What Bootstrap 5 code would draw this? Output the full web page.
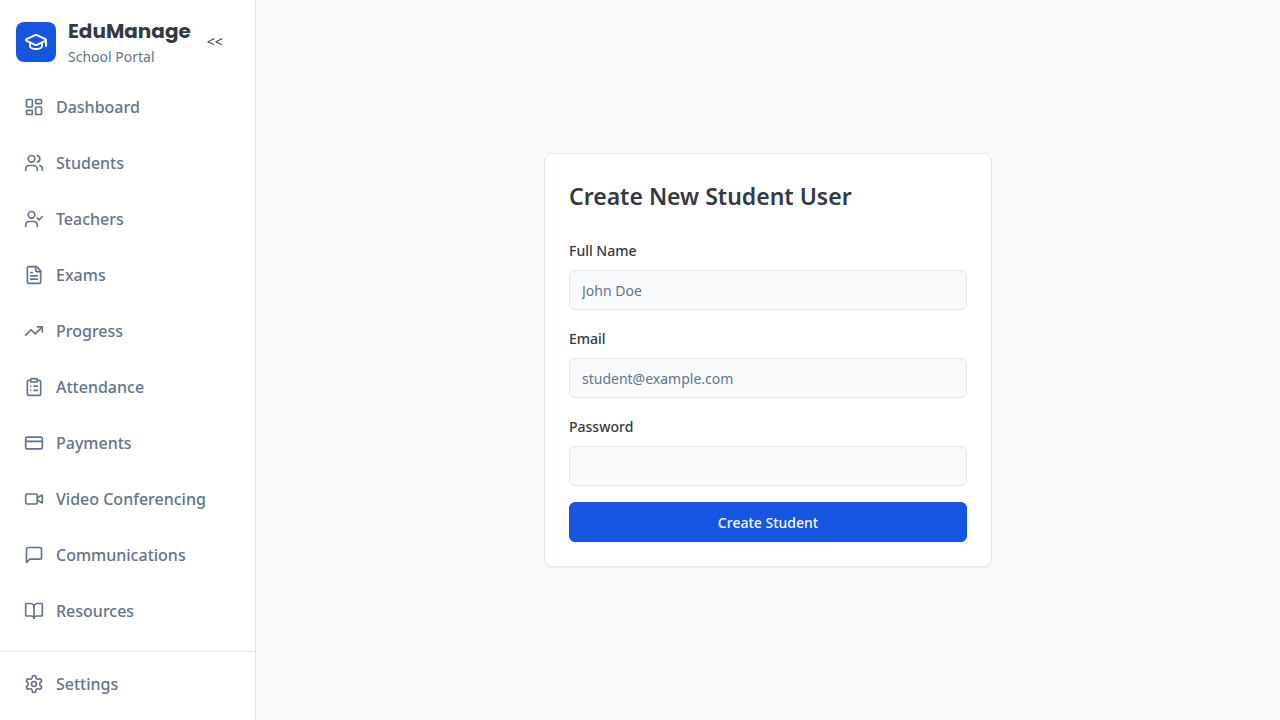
<!DOCTYPE html>
<html lang="en">
<head>
<meta charset="utf-8">
<meta name="viewport" content="width=device-width, initial-scale=1">
<title>EduManage – Create New Student User</title>
<link href="https://cdn.jsdelivr.net/npm/bootstrap@5.3.0/dist/css/bootstrap.min.css" rel="stylesheet">
<style>
  :root {
    --edu-primary: #1655e0;
    --edu-ink: #333a42;
    --edu-muted: #64748b;
    --edu-line: #e1e7ef;
    --edu-surface: #f8fafc;
  }
  body {
    font-family: "Noto Sans", "Open Sans", sans-serif;
    color: var(--edu-ink);
    background: var(--edu-surface);
  }
  .sidebar { width: 256px; border-right: 1px solid var(--edu-line); }
  .brand-logo { width: 40px; height: 40px; border-radius: 8px; background: var(--edu-primary); }
  .brand-name { font: 700 20px/30px Poppins, "Noto Sans", sans-serif; }
  .brand-sub { font-size: 14px; line-height: 22px; color: var(--edu-muted); }
  .collapse-btn { font-size: 14px; line-height: 20px; color: var(--edu-ink); }
  .menu { gap: 10px; }
  .menu .nav-link {
    padding: 11px 12px;
    font-weight: 500;
    line-height: 24px;
    color: var(--edu-muted);
    border-radius: 6px;
  }
  .menu .nav-link:hover { background: var(--edu-surface); color: var(--edu-ink); }
  .sidebar-foot { border-top: 1px solid var(--edu-line); padding: 9px 12px 13px; }
  svg { fill: none; stroke: currentColor; stroke-width: 2; stroke-linecap: round; stroke-linejoin: round; flex: none; }
  .form-panel {
    max-width: 448px;
    border: 1px solid var(--edu-line);
    border-radius: 8px;
    box-shadow: 0 1px 2px rgba(0, 0, 0, .05);
  }
  .form-panel h1 { font-size: 23px; line-height: 36px; font-weight: 600; }
  .form-panel .form-label { margin-bottom: 6px; font-size: 14px; line-height: 26px; font-weight: 500; }
  .form-panel .form-control {
    height: 40px;
    padding: 8px 12px;
    font-size: 14px;
    color: var(--edu-ink);
    background: var(--edu-surface);
    border-color: var(--edu-line);
    border-radius: 6px;
  }
  .form-panel .form-control::placeholder { color: var(--edu-muted); }
  .form-panel .btn {
    --bs-btn-bg: var(--edu-primary);
    --bs-btn-border-color: var(--edu-primary);
    height: 40px;
    font-size: 14px;
    font-weight: 500;
    color: var(--edu-surface);
    border-radius: 6px;
  }
</style>
</head>
<body>
<div class="d-flex min-vh-100">
  <aside class="sidebar d-flex flex-column flex-shrink-0 bg-white">
    <header class="d-flex align-items-center p-3">
      <div class="brand-logo d-flex align-items-center justify-content-center text-white flex-shrink-0">
        <svg width="24" height="24" viewBox="0 0 24 24" aria-hidden="true"><path d="M21.42 10.922a1 1 0 0 0-.019-1.838L12.83 5.18a2 2 0 0 0-1.66 0L2.6 9.08a1 1 0 0 0 0 1.832l8.57 3.908a2 2 0 0 0 1.66 0z"/><path d="M22 10v6"/><path d="M6 12.5V16a6 3 0 0 0 12 0v-3.5"/></svg>
      </div>
      <div class="ms-2 ps-1">
        <div class="brand-name">EduManage</div>
        <div class="brand-sub">School Portal</div>
      </div>
      <button type="button" class="collapse-btn btn border-0 p-0 ms-3" aria-label="Collapse sidebar">&lt;&lt;</button>
    </header>
    <nav class="menu nav flex-column flex-nowrap flex-grow-1 px-2 mx-1 pb-3" aria-label="Main">
      <a class="nav-link d-flex align-items-center" href="#">
        <svg class="me-2" width="20" height="20" viewBox="0 0 24 24" aria-hidden="true"><rect width="7" height="9" x="3" y="3" rx="1"/><rect width="7" height="5" x="14" y="3" rx="1"/><rect width="7" height="9" x="14" y="12" rx="1"/><rect width="7" height="5" x="3" y="16" rx="1"/></svg>
        <span class="ms-1">Dashboard</span></a>
      <a class="nav-link d-flex align-items-center" href="#">
        <svg class="me-2" width="20" height="20" viewBox="0 0 24 24" aria-hidden="true"><path d="M16 21v-2a4 4 0 0 0-4-4H6a4 4 0 0 0-4 4v2"/><circle cx="9" cy="7" r="4"/><path d="M22 21v-2a4 4 0 0 0-3-3.87"/><path d="M16 3.13a4 4 0 0 1 0 7.75"/></svg>
        <span class="ms-1">Students</span></a>
      <a class="nav-link d-flex align-items-center" href="#">
        <svg class="me-2" width="20" height="20" viewBox="0 0 24 24" aria-hidden="true"><path d="M16 21v-2a4 4 0 0 0-4-4H6a4 4 0 0 0-4 4v2"/><circle cx="9" cy="7" r="4"/><path d="m16 11 2 2 4-4"/></svg>
        <span class="ms-1">Teachers</span></a>
      <a class="nav-link d-flex align-items-center" href="#">
        <svg class="me-2" width="20" height="20" viewBox="0 0 24 24" aria-hidden="true"><path d="M15 2H6a2 2 0 0 0-2 2v16a2 2 0 0 0 2 2h12a2 2 0 0 0 2-2V7Z"/><path d="M14 2v4a2 2 0 0 0 2 2h4"/><path d="M10 9H8"/><path d="M16 13H8"/><path d="M16 17H8"/></svg>
        <span class="ms-1">Exams</span></a>
      <a class="nav-link d-flex align-items-center" href="#">
        <svg class="me-2" width="20" height="20" viewBox="0 0 24 24" aria-hidden="true"><path d="m22 7-8.500 8.500-5-5L2 17"/><path d="M16 7h6v6"/></svg>
        <span class="ms-1">Progress</span></a>
      <a class="nav-link d-flex align-items-center" href="#">
        <svg class="me-2" width="20" height="20" viewBox="0 0 24 24" aria-hidden="true"><rect width="8" height="4" x="8" y="2" rx="1"/><path d="M16 4h2a2 2 0 0 1 2 2v14a2 2 0 0 1-2 2H6a2 2 0 0 1-2-2V6a2 2 0 0 1 2-2h2"/><path d="M12 11h4"/><path d="M12 16h4"/><path d="M8 11h.01"/><path d="M8 16h.01"/></svg>
        <span class="ms-1">Attendance</span></a>
      <a class="nav-link d-flex align-items-center" href="#">
        <svg class="me-2" width="20" height="20" viewBox="0 0 24 24" aria-hidden="true"><rect width="20" height="14" x="2" y="5" rx="2"/><path d="M2 10h20"/></svg>
        <span class="ms-1">Payments</span></a>
      <a class="nav-link d-flex align-items-center" href="#">
        <svg class="me-2" width="20" height="20" viewBox="0 0 24 24" aria-hidden="true"><path d="m16 13 5.223 3.482a.5.5 0 0 0 .777-.416V7.870a.5.5 0 0 0-.752-.432L16 10.500"/><rect width="14" height="12" x="2" y="6" rx="2"/></svg>
        <span class="ms-1">Video Conferencing</span></a>
      <a class="nav-link d-flex align-items-center" href="#">
        <svg class="me-2" width="20" height="20" viewBox="0 0 24 24" aria-hidden="true"><path d="M21 15a2 2 0 0 1-2 2H7l-4 4V5a2 2 0 0 1 2-2h14a2 2 0 0 1 2 2z"/></svg>
        <span class="ms-1">Communications</span></a>
      <a class="nav-link d-flex align-items-center" href="#">
        <svg class="me-2" width="20" height="20" viewBox="0 0 24 24" aria-hidden="true"><path d="M12 7v14"/><path d="M3 18a1 1 0 0 1-1-1V4a1 1 0 0 1 1-1h5a4 4 0 0 1 4 4 4 4 0 0 1 4-4h5a1 1 0 0 1 1 1v13a1 1 0 0 1-1 1h-6a3 3 0 0 0-3 3 3 3 0 0 0-3-3z"/></svg>
        <span class="ms-1">Resources</span></a>
    </nav>
    <footer class="sidebar-foot menu">
      <a class="nav-link d-flex align-items-center" href="#">
        <svg class="me-2" width="20" height="20" viewBox="0 0 24 24" aria-hidden="true"><path d="M12.220 2h-.44a2 2 0 0 0-2 2v.18a2 2 0 0 1-1 1.730l-.43.25a2 2 0 0 1-2 0l-.15-.08a2 2 0 0 0-2.730.73l-.22.38a2 2 0 0 0 .73 2.730l.15.1a2 2 0 0 1 1 1.720v.51a2 2 0 0 1-1 1.740l-.15.09a2 2 0 0 0-.73 2.730l.22.38a2 2 0 0 0 2.730.73l.15-.08a2 2 0 0 1 2 0l.43.25a2 2 0 0 1 1 1.730V20a2 2 0 0 0 2 2h.44a2 2 0 0 0 2-2v-.18a2 2 0 0 1 1-1.730l.43-.25a2 2 0 0 1 2 0l.15.08a2 2 0 0 0 2.730-.73l.22-.39a2 2 0 0 0-.73-2.730l-.15-.08a2 2 0 0 1-1-1.740v-.5a2 2 0 0 1 1-1.740l.15-.09a2 2 0 0 0 .73-2.730l-.22-.38a2 2 0 0 0-2.730-.73l-.15.08a2 2 0 0 1-2 0l-.43-.25a2 2 0 0 1-1-1.730V4a2 2 0 0 0-2-2z"/><circle cx="12" cy="12" r="3"/></svg>
        <span class="ms-1">Settings</span></a>
    </footer>
  </aside>

  <main class="flex-grow-1 d-flex align-items-center justify-content-center">
    <form class="form-panel w-100 bg-white p-4">
      <h1 class="mb-4">Create New Student User</h1>
      <div class="mb-3">
        <label class="form-label d-block" for="fullName">Full Name</label>
        <input class="form-control" type="text" id="fullName" placeholder="John Doe">
      </div>
      <div class="mb-3">
        <label class="form-label d-block" for="email">Email</label>
        <input class="form-control" type="email" id="email" placeholder="student@example.com">
      </div>
      <div class="mb-3">
        <label class="form-label d-block" for="password">Password</label>
        <input class="form-control" type="password" id="password">
      </div>
      <button type="submit" class="btn btn-primary w-100">Create Student</button>
    </form>
  </main>
</div>
<script src="https://cdn.jsdelivr.net/npm/bootstrap@5.3.0/dist/js/bootstrap.bundle.min.js"></script>
</body>
</html>
